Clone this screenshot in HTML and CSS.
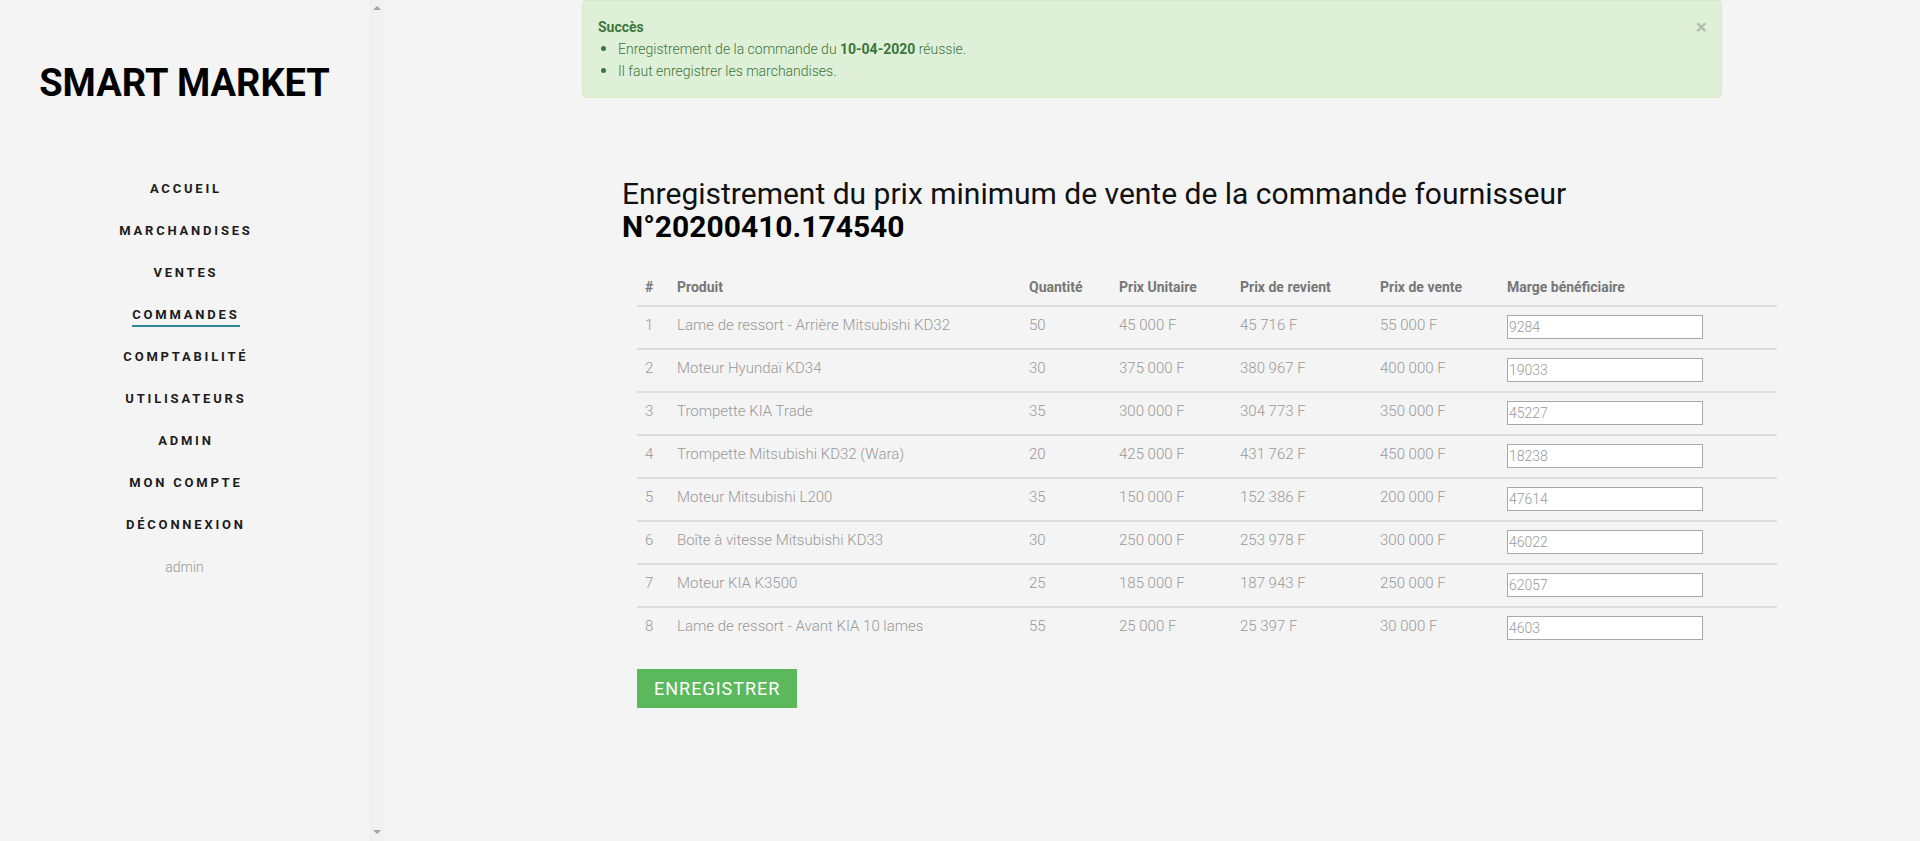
FILE: index.html
```html
<!DOCTYPE html>
<html lang="fr">
<head>
<meta charset="utf-8">
<title>Smart Market</title>
<link rel="stylesheet" href="styles.css">
</head>
<body>
<div class="app">
  <aside class="sidebar">
    <div class="sidebar-inner">
      <h1 class="brand">SMART MARKET</h1>
      <ul class="nav">
        <li><a class="nav-link">ACCUEIL</a></li>
        <li><a class="nav-link">MARCHANDISES</a></li>
        <li><a class="nav-link">VENTES</a></li>
        <li><a class="nav-link active">COMMANDES</a></li>
        <li><a class="nav-link">COMPTABILITÉ</a></li>
        <li><a class="nav-link">UTILISATEURS</a></li>
        <li><a class="nav-link">ADMIN</a></li>
        <li><a class="nav-link">MON COMPTE</a></li>
        <li><a class="nav-link">DÉCONNEXION</a></li>
        <li class="user">admin</li>
      </ul>
    </div>
    <div class="scrollbar">
      <span class="arrow arrow-up"></span>
      <span class="arrow arrow-down"></span>
    </div>
  </aside>
  <main class="main">
    <div class="container">
      <div class="alert">
        <button class="close" type="button">×</button>
        <strong class="alert-title">Succès</strong>
        <ul class="alert-list">
          <li>Enregistrement de la commande du <strong>10-04-2020</strong> réussie.</li>
          <li>Il faut enregistrer les marchandises.</li>
        </ul>
      </div>
      <section class="content">
        <h2 class="title">Enregistrement du prix minimum de vente de la commande fournisseur<br><strong>N°20200410.174540</strong></h2>
        <table class="table">
          <colgroup>
            <col class="c-num"><col class="c-prod"><col class="c-qty"><col class="c-pu"><col class="c-pr"><col class="c-pv"><col class="c-marge">
          </colgroup>
          <thead>
            <tr>
              <th>#</th>
              <th>Produit</th>
              <th>Quantité</th>
              <th>Prix Unitaire</th>
              <th>Prix de revient</th>
              <th>Prix de vente</th>
              <th>Marge bénéficiaire</th>
            </tr>
          </thead>
          <tbody>
            <tr><td>1</td><td>Lame de ressort - Arrière Mitsubishi KD32</td><td>50</td><td>45 000 F</td><td>45 716 F</td><td>55 000 F</td><td><input class="input" type="text" value="9284"></td></tr>
            <tr><td>2</td><td>Moteur Hyundaï KD34</td><td>30</td><td>375 000 F</td><td>380 967 F</td><td>400 000 F</td><td><input class="input" type="text" value="19033"></td></tr>
            <tr><td>3</td><td>Trompette KIA Trade</td><td>35</td><td>300 000 F</td><td>304 773 F</td><td>350 000 F</td><td><input class="input" type="text" value="45227"></td></tr>
            <tr><td>4</td><td>Trompette Mitsubishi KD32 (Wara)</td><td>20</td><td>425 000 F</td><td>431 762 F</td><td>450 000 F</td><td><input class="input" type="text" value="18238"></td></tr>
            <tr><td>5</td><td>Moteur Mitsubishi L200</td><td>35</td><td>150 000 F</td><td>152 386 F</td><td>200 000 F</td><td><input class="input" type="text" value="47614"></td></tr>
            <tr><td>6</td><td>Boîte à vitesse Mitsubishi KD33</td><td>30</td><td>250 000 F</td><td>253 978 F</td><td>300 000 F</td><td><input class="input" type="text" value="46022"></td></tr>
            <tr><td>7</td><td>Moteur KIA K3500</td><td>25</td><td>185 000 F</td><td>187 943 F</td><td>250 000 F</td><td><input class="input" type="text" value="62057"></td></tr>
            <tr><td>8</td><td>Lame de ressort - Avant KIA 10 lames</td><td>55</td><td>25 000 F</td><td>25 397 F</td><td>30 000 F</td><td><input class="input" type="text" value="4603"></td></tr>
          </tbody>
        </table>
        <button class="btn-save" type="button">ENREGISTRER</button>
      </section>
    </div>
  </main>
</div>
</body>
</html>
```

FILE: styles.css
```css
* { box-sizing: border-box; }

html, body {
  margin: 0;
  padding: 0;
}

body {
  background: #f4f4f4;
  font-family: Roboto, "Noto Sans", Arial, sans-serif;
  color: #333;
  font-size: 14px;
}

.app {
  display: flex;
  height: 841px;
  overflow: hidden;
}

/* ---------- Sidebar ---------- */
.sidebar {
  flex: 0 0 384px;
  display: flex;
  background: #f4f4f4;
}

.sidebar-inner {
  flex: 1;
  display: flex;
  flex-direction: column;
  align-items: center;
}

.brand {
  margin: 61px 0 0;
  font-size: 38px;
  line-height: 44px;
  font-weight: 700;
  color: #000;
  letter-spacing: 0;
}

.nav {
  list-style: none;
  margin: 63px 0 0;
  padding: 0;
  width: 100%;
}

.nav li {
  height: 42px;
  display: flex;
  align-items: center;
  justify-content: center;
}

.nav-link {
  position: relative;
  display: inline-block;
  font-size: 13px;
  line-height: 16px;
  font-weight: 700;
  letter-spacing: 2.8px;
  color: #1c1c1c;
  margin-right: -2.8px;
}

.nav-link.active::after {
  content: "";
  position: absolute;
  left: 0;
  right: 0;
  top: 18px;
  height: 2px;
  background: #2b8a96;
}

.nav .user {
  font-size: 14px;
  font-weight: 300;
  color: #999;
}

.scrollbar {
  flex: 0 0 15px;
  background: #f0f0f0;
  display: flex;
  flex-direction: column;
  justify-content: space-between;
  align-items: center;
  padding: 6px 0 7px;
}

.arrow {
  width: 0;
  height: 0;
  border-left: 4px solid transparent;
  border-right: 4px solid transparent;
}

.arrow-up { border-bottom: 4px solid #a3a3a3; }
.arrow-down { border-top: 4px solid #a3a3a3; }

/* ---------- Main ---------- */
.main {
  flex: 1;
  min-width: 0;
}

.container {
  width: 1140px;
  margin: 0 auto;
}

.alert {
  position: relative;
  background: #dff0d8;
  border: 1px solid #d6e9c6;
  border-radius: 4px;
  padding: 15px;
  color: #3c763d;
  font-size: 14px;
  line-height: 22px;
  margin-bottom: 79px;
}

.alert-title {
  display: block;
  font-weight: 700;
  font-size: 14px;
}

.alert-list {
  margin: 0;
  padding-left: 20px;
  font-weight: 300;
}

.alert-list li::marker {
  font-size: 16px;
}

.alert-list strong {
  font-weight: 700;
}

.close {
  position: absolute;
  top: 16px;
  right: 14px;
  border: 0;
  background: transparent;
  padding: 0;
  font-family: Roboto, Arial, sans-serif;
  font-size: 21px;
  font-weight: 700;
  line-height: 1;
  color: #000;
  opacity: .2;
}

.title {
  margin: 0 0 26px 40px;
  font-size: 30px;
  line-height: 33px;
  font-weight: 400;
  color: #111;
}

.title strong {
  font-weight: 700;
  color: #000;
}

.table {
  margin: 0 0 20px 55px;
  width: 1140px;
  table-layout: fixed;
  border-collapse: separate;
  border-spacing: 0;
}

.c-num { width: 32px; }
.c-prod { width: 352px; }
.c-qty { width: 90px; }
.c-pu { width: 121px; }
.c-pr { width: 140px; }
.c-pv { width: 127px; }
.c-marge { width: 278px; }

.table th {
  text-align: left;
  padding: 8px;
  font-size: 14px;
  line-height: 20px;
  font-weight: 700;
  color: #777;
  border-bottom: 2px solid #ddd;
  white-space: nowrap;
}

.table td {
  padding: 8px 8px 9px;
  font-size: 15px;
  line-height: 20px;
  font-weight: 300;
  color: #999;
  vertical-align: top;
  white-space: nowrap;
}

.table tbody tr + tr td {
  border-top: 2px solid #ddd;
}

.input {
  display: block;
  width: 196px;
  height: 24px;
  border: 1px solid #a9a9a9;
  background: #fff;
  padding: 0 0 0 1px;
  font-family: Roboto, Arial, sans-serif;
  font-size: 14px;
  font-weight: 300;
  color: #999;
  outline: none;
}

.btn-save {
  margin-left: 55px;
  height: 39px;
  padding: 0 17px;
  border: 0;
  border-radius: 0;
  background: #5cb85c;
  color: #fff;
  font-family: Roboto, Arial, sans-serif;
  font-size: 18px;
  font-weight: 400;
  letter-spacing: 1px;
  line-height: 39px;
}
```
